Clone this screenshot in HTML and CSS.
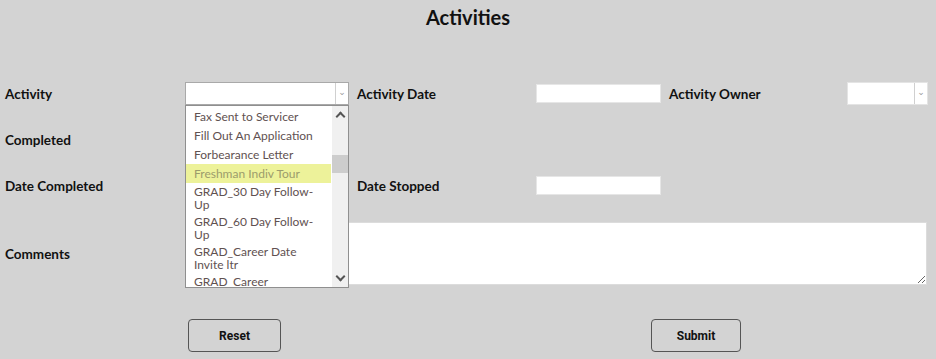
FILE: index.html
```html
<!DOCTYPE html>
<html lang="en">
<head>
  <meta charset="UTF-8" />
  <meta name="viewport" content="width=device-width, initial-scale=1.0"/>
  <title>Activities</title>
  <link rel="stylesheet" href="styles.css">
</head>
<body>
  <h1 class="page-title">Activities</h1>

  <form class="activity-form">
    <label class="field-label r1 c1" for="activity">Activity</label>
    <div class="select-cell r1 c2">
      <div class="fake-select wide" id="activity"><span class="select-arrow">&#8964;</span></div>
      <ul class="option-list">
        <li>Fax Sent to Servicer</li>
        <li>Fill Out An Application</li>
        <li>Forbearance Letter</li>
        <li class="hover">Freshman Indiv Tour</li>
        <li>GRAD_30 Day Follow-Up</li>
        <li>GRAD_60 Day Follow-Up</li>
        <li>GRAD_Career Date Invite ltr</li>
        <li>GRAD_Career Workshop</li>
      </ul>
      <div class="list-scroll">
        <span class="scroll-up"></span>
        <span class="scroll-thumb"></span>
        <span class="scroll-down"></span>
      </div>
    </div>
    <label class="field-label r1 c3" for="activityDate">Activity Date</label>
    <input class="date-input r1 c4" type="text" id="activityDate" />
    <label class="field-label r1 c5" for="owner">Activity Owner</label>
    <div class="fake-select narrow r1 c6" id="owner"><span class="select-arrow">&#8964;</span></div>

    <label class="field-label r2 c1" for="completed">Completed</label>
    <input class="check r2 c2" type="checkbox" id="completed" />

    <label class="field-label r3 c1" for="dateCompleted">Date Completed</label>
    <input class="date-input r3 c2" type="text" id="dateCompleted" />
    <label class="field-label r3 c3" for="dateStopped">Date Stopped</label>
    <input class="date-input r3 c4" type="text" id="dateStopped" />

    <label class="field-label r4 c1 comments-label" for="comments">Comments</label>
    <textarea class="comments r4" id="comments"></textarea>
  </form>

  <div class="actions">
    <button type="reset" class="btn reset">Reset</button>
    <button type="submit" class="btn submit">Submit</button>
  </div>
</body>
</html>
```

FILE: styles.css
```css
body {
  margin: 0;
  background-color: #d3d3d3;
  font-family: Lato, "DejaVu Sans", sans-serif;
  color: #111;
}
.page-title {
  margin: 0;
  padding-top: 5px;
  font-size: 20px;
  line-height: 24px;
  text-align: center;
  font-weight: bold;
}
.activity-form {
  display: grid;
  grid-template-columns: 180px 172px 179px 133px 178px 81px;
  grid-template-rows: 23px 23px 23px 65px;
  row-gap: 23px;
  align-items: center;
  padding-left: 5px;
  margin-top: 53px;
}
.r1 { grid-row: 1; }
.r2 { grid-row: 2; }
.r3 { grid-row: 3; }
.r4 { grid-row: 4; }
.c1 { grid-column: 1; }
.c2 { grid-column: 2; }
.c3 { grid-column: 3; }
.c4 { grid-column: 4; }
.c5 { grid-column: 5; }
.c6 { grid-column: 6; }
.field-label {
  font-weight: bold;
  font-size: 13.5px;
}
.comments-label {
  padding-top: 3px;
}
.select-cell {
  position: relative;
  z-index: 2;
  height: 23px;
}
.fake-select {
  box-sizing: border-box;
  height: 23px;
  background: white;
  border: 1px solid #a9a9a9;
  position: relative;
}
.fake-select.wide { width: 164px; }
.fake-select.narrow { width: 81px; border-color: #e4e4e4; }
.select-arrow {
  position: absolute;
  right: 0;
  top: 0;
  width: 12px;
  height: 21px;
  border-left: 1px solid #d0d0d0;
  color: #999;
  font-size: 9px;
  line-height: 17px;
  text-align: center;
}
.date-input {
  box-sizing: border-box;
  width: 125px;
  height: 19px;
  border: 1px solid #e6e6e6;
  background: white;
  margin: 0;
}
.check {
  margin: 0;
}
.comments {
  grid-column: 2 / 7;
  align-self: end;
  box-sizing: border-box;
  width: 742px;
  height: 63px;
  margin: 0;
  border: 1px solid #dcdcdc;
  background: white;
  resize: both;
}
.option-list {
  position: absolute;
  top: 23px;
  left: 0;
  box-sizing: border-box;
  width: 164px;
  height: 183px;
  margin: 0;
  padding: 1px 17px 0 0;
  list-style: none;
  background: white;
  border: 1px solid #8f8f8f;
  overflow: hidden;
  font-size: 12px;
  color: #5f5151;
}
.option-list li {
  padding: 2px 8px;
  min-height: 15px;
  line-height: 13px;
  display: flex;
  align-items: center;
}
.option-list li.hover {
  background: #edf29a;
  color: #9c9c6c;
}
.list-scroll {
  position: absolute;
  top: 24px;
  left: 147px;
  width: 16px;
  height: 181px;
  background: #f0f0f0;
}
.scroll-up,
.scroll-down {
  position: absolute;
  left: 5px;
  width: 5px;
  height: 5px;
  border-left: 2px solid #555;
  border-top: 2px solid #555;
}
.scroll-up { top: 7px; transform: rotate(45deg); }
.scroll-down { bottom: 7px; transform: rotate(225deg); }
.scroll-thumb {
  position: absolute;
  top: 49px;
  left: 0;
  width: 16px;
  height: 18px;
  background: #cdcdcd;
}
.actions {
  display: flex;
  margin-top: 34px;
  padding-left: 188px;
}
.btn {
  height: 33px;
  background: transparent;
  border: 1px solid #555;
  border-radius: 4px;
  font-family: Roboto, "Liberation Sans", sans-serif;
  font-weight: bold;
  font-size: 12px;
  color: #111;
}
.reset { width: 93px; }
.submit { width: 90px; margin-left: 370px; }
```
